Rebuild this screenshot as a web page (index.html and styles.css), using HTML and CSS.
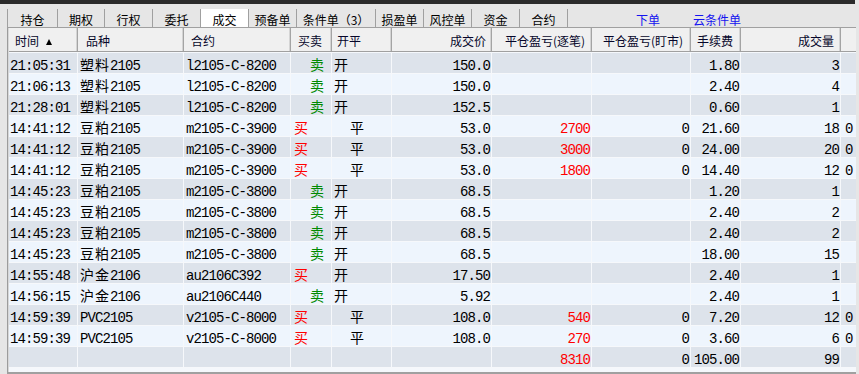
FILE: index.html
```html
<!DOCTYPE html>
<html lang="zh">
<head>
<meta charset="utf-8">
<title>成交</title>
<link rel="stylesheet" href="styles.css">
</head>
<body>
<div class="topband"></div>
<div class="tabbar">
  <div class="tab first">持仓</div>
  <div class="tab w47">期权</div>
  <div class="tab">行权</div>
  <div class="tab">委托</div>
  <div class="tab active">成交</div>
  <div class="tab">预备单</div>
  <div class="tab wide">条件单（3）</div>
  <div class="tab">损盈单</div>
  <div class="tab">风控单</div>
  <div class="tab">资金</div>
  <div class="tab last">合约</div>
  <span class="link first-link">下单</span>
  <span class="link">云条件单</span>
</div>
<div class="panel">
  <div class="row hdr">
    <div class="h hl h1">时间<span class="arrow"></span></div>
    <div class="h hl h2">品种</div>
    <div class="h hl h3">合约</div>
    <div class="h hl h4">买卖</div>
    <div class="h hl h5">开平</div>
    <div class="h hr h6">成交价</div>
    <div class="h hr h7">平仓盈亏(逐笔)</div>
    <div class="h hr h8">平仓盈亏(盯市)</div>
    <div class="h hr h9">手续费</div>
    <div class="h hr h10">成交量</div>
    <div class="h hl h11"></div>
  </div>

  <div class="row d odd">
    <div class="c c1">21:05:31</div><div class="c c2"><span class="cj">塑料</span>2105</div><div class="c c3">l2105-C-8200</div>
    <div class="c c4"><span class="cj sell">卖</span></div><div class="c c5"><span class="cj">开</span></div>
    <div class="c r">150.0</div><div class="c r red"></div><div class="c r"></div><div class="c r">1.80</div><div class="c r">3</div><div class="c c11"></div>
  </div>
  <div class="row d even">
    <div class="c c1">21:06:13</div><div class="c c2"><span class="cj">塑料</span>2105</div><div class="c c3">l2105-C-8200</div>
    <div class="c c4"><span class="cj sell">卖</span></div><div class="c c5"><span class="cj">开</span></div>
    <div class="c r">150.0</div><div class="c r red"></div><div class="c r"></div><div class="c r">2.40</div><div class="c r">4</div><div class="c c11"></div>
  </div>
  <div class="row d odd">
    <div class="c c1">21:28:01</div><div class="c c2"><span class="cj">塑料</span>2105</div><div class="c c3">l2105-C-8200</div>
    <div class="c c4"><span class="cj sell">卖</span></div><div class="c c5"><span class="cj">开</span></div>
    <div class="c r">152.5</div><div class="c r red"></div><div class="c r"></div><div class="c r">0.60</div><div class="c r">1</div><div class="c c11"></div>
  </div>
  <div class="row d even">
    <div class="c c1">14:41:12</div><div class="c c2"><span class="cj">豆粕</span>2105</div><div class="c c3">m2105-C-3900</div>
    <div class="c c4"><span class="cj buy">买</span></div><div class="c c5"><span class="cj close">平</span></div>
    <div class="c r">53.0</div><div class="c r red">2700</div><div class="c r">0</div><div class="c r">21.60</div><div class="c r">18</div><div class="c c11">0</div>
  </div>
  <div class="row d odd">
    <div class="c c1">14:41:12</div><div class="c c2"><span class="cj">豆粕</span>2105</div><div class="c c3">m2105-C-3900</div>
    <div class="c c4"><span class="cj buy">买</span></div><div class="c c5"><span class="cj close">平</span></div>
    <div class="c r">53.0</div><div class="c r red">3000</div><div class="c r">0</div><div class="c r">24.00</div><div class="c r">20</div><div class="c c11">0</div>
  </div>
  <div class="row d even">
    <div class="c c1">14:41:12</div><div class="c c2"><span class="cj">豆粕</span>2105</div><div class="c c3">m2105-C-3900</div>
    <div class="c c4"><span class="cj buy">买</span></div><div class="c c5"><span class="cj close">平</span></div>
    <div class="c r">53.0</div><div class="c r red">1800</div><div class="c r">0</div><div class="c r">14.40</div><div class="c r">12</div><div class="c c11">0</div>
  </div>
  <div class="row d odd">
    <div class="c c1">14:45:23</div><div class="c c2"><span class="cj">豆粕</span>2105</div><div class="c c3">m2105-C-3800</div>
    <div class="c c4"><span class="cj sell">卖</span></div><div class="c c5"><span class="cj">开</span></div>
    <div class="c r">68.5</div><div class="c r red"></div><div class="c r"></div><div class="c r">1.20</div><div class="c r">1</div><div class="c c11"></div>
  </div>
  <div class="row d even">
    <div class="c c1">14:45:23</div><div class="c c2"><span class="cj">豆粕</span>2105</div><div class="c c3">m2105-C-3800</div>
    <div class="c c4"><span class="cj sell">卖</span></div><div class="c c5"><span class="cj">开</span></div>
    <div class="c r">68.5</div><div class="c r red"></div><div class="c r"></div><div class="c r">2.40</div><div class="c r">2</div><div class="c c11"></div>
  </div>
  <div class="row d odd">
    <div class="c c1">14:45:23</div><div class="c c2"><span class="cj">豆粕</span>2105</div><div class="c c3">m2105-C-3800</div>
    <div class="c c4"><span class="cj sell">卖</span></div><div class="c c5"><span class="cj">开</span></div>
    <div class="c r">68.5</div><div class="c r red"></div><div class="c r"></div><div class="c r">2.40</div><div class="c r">2</div><div class="c c11"></div>
  </div>
  <div class="row d even">
    <div class="c c1">14:45:23</div><div class="c c2"><span class="cj">豆粕</span>2105</div><div class="c c3">m2105-C-3800</div>
    <div class="c c4"><span class="cj sell">卖</span></div><div class="c c5"><span class="cj">开</span></div>
    <div class="c r">68.5</div><div class="c r red"></div><div class="c r"></div><div class="c r">18.00</div><div class="c r">15</div><div class="c c11"></div>
  </div>
  <div class="row d odd">
    <div class="c c1">14:55:48</div><div class="c c2"><span class="cj">沪金</span>2106</div><div class="c c3">au2106C392</div>
    <div class="c c4"><span class="cj buy">买</span></div><div class="c c5"><span class="cj">开</span></div>
    <div class="c r">17.50</div><div class="c r red"></div><div class="c r"></div><div class="c r">2.40</div><div class="c r">1</div><div class="c c11"></div>
  </div>
  <div class="row d even">
    <div class="c c1">14:56:15</div><div class="c c2"><span class="cj">沪金</span>2106</div><div class="c c3">au2106C440</div>
    <div class="c c4"><span class="cj sell">卖</span></div><div class="c c5"><span class="cj">开</span></div>
    <div class="c r">5.92</div><div class="c r red"></div><div class="c r"></div><div class="c r">2.40</div><div class="c r">1</div><div class="c c11"></div>
  </div>
  <div class="row d odd">
    <div class="c c1">14:59:39</div><div class="c c2">PVC2105</div><div class="c c3">v2105-C-8000</div>
    <div class="c c4"><span class="cj buy">买</span></div><div class="c c5"><span class="cj close">平</span></div>
    <div class="c r">108.0</div><div class="c r red">540</div><div class="c r">0</div><div class="c r">7.20</div><div class="c r">12</div><div class="c c11">0</div>
  </div>
  <div class="row d even">
    <div class="c c1">14:59:39</div><div class="c c2">PVC2105</div><div class="c c3">v2105-C-8000</div>
    <div class="c c4"><span class="cj buy">买</span></div><div class="c c5"><span class="cj close">平</span></div>
    <div class="c r">108.0</div><div class="c r red">270</div><div class="c r">0</div><div class="c r">3.60</div><div class="c r">6</div><div class="c c11">0</div>
  </div>
  <div class="row d odd">
    <div class="c c1"></div><div class="c c2"></div><div class="c c3"></div>
    <div class="c c4"></div><div class="c c5"></div>
    <div class="c r"></div><div class="c r red">8310</div><div class="c r">0</div><div class="c r">105.00</div><div class="c r">99</div><div class="c c11"></div>
  </div>
</div>
</body>
</html>
```

FILE: styles.css
```css
html, body {
  margin: 0;
  padding: 0;
}
body {
  width: 859px;
  height: 374px;
  overflow: hidden;
  background: #e6e6e6;
  font-family: "Noto Sans CJK SC", sans-serif;
  color: #000;
}

.topband {
  height: 4px;
  width: 855px;
  background: #2b2b2b;
}

/* ---------- tab bar ---------- */
.tabbar {
  display: flex;
  align-items: flex-end;
  box-sizing: border-box;
  height: 24px;
  margin-left: 7px;
  width: 849px;
  border-bottom: 1px solid #a0a0a0;
  font-size: 12px;
}
.tab {
  box-sizing: border-box;
  flex: none;
  width: 48px;
  height: 18px;
  line-height: 22px;
  text-align: center;
  border-left: 1px solid #a0a0a0;
  white-space: nowrap;
}
.tab.first { width: 50px; }
.tab.w47 { width: 47px; }
.tab.wide { width: 79px; }
.tab.last { width: 49px; border-right: 1px solid #a0a0a0; }
.tab.active { background: #ffffff; }

.link {
  flex: none;
  height: 18px;
  line-height: 22px;
  color: #1414f0;
  white-space: nowrap;
}
.link.first-link { margin-left: 68px; }
.link + .link { margin-left: 33px; }

/* ---------- grid panel ---------- */
.panel {
  box-sizing: border-box;
  margin-left: 7px;
  width: 849px;
  height: 346px;
  padding-left: 1px;
  border-left: 1px solid #9c9c9c;
  border-bottom: 2px solid #a0a0a0;
  box-shadow: inset 1px 0 0 #d8d8d8;
  background: #f5f8fc;
  overflow: hidden;
}
.row {
  display: grid;
  grid-template-columns: 69px 106px 107px 41px 60px 100px 100px 99px 50px 100px 80px;
}

.hdr {
  height: 23px;
  background: #f0f0f0;
  border-bottom: 1px solid #a0a0a0;
  margin-bottom: 1px;
  font-size: 12px;
}
.h {
  box-sizing: border-box;
  height: 23px;
  padding-top: 3px;
  line-height: 20px;
  border-right: 1px solid #a4a4a4;
  box-shadow: inset -1px 0 0 #d4d4d4;
  white-space: nowrap;
  color: #06062a;
}
.hl { text-align: left; }
.hr { text-align: right; padding-right: 6px; }
.h1 { padding-left: 6px; }
.h2 { padding-left: 8px; }
.h3 { padding-left: 7px; }
.h4 { padding-left: 7px; }
.h5 { padding-left: 5px; }
.h6 { padding-right: 5px; }
.h8 { padding-right: 7px; }
.h9 { padding-right: 7px; }
.h11 { border-right: none; box-shadow: none; }

.arrow {
  display: inline-block;
  width: 0;
  height: 0;
  border-left: 3.5px solid transparent;
  border-right: 3.5px solid transparent;
  border-bottom: 6px solid #000;
  margin-left: 7px;
  vertical-align: 1px;
}

/* ---------- data rows ---------- */
.d {
  height: 21px;
  box-sizing: border-box;
  border-bottom: 1px solid #f6f8fb;
  font-family: "Liberation Mono", monospace;
  font-size: 14px;
  letter-spacing: -0.9px;
}
.odd { background: #dde3eb; }
.even { background: #eef5fd; }

.c {
  box-sizing: border-box;
  height: 20px;
  padding-top: 3px;
  line-height: 20px;
  border-right: 1px solid #f6f8fb;
  white-space: pre;
}
.c1 { padding-left: 1px; }
.c2 { padding-left: 2px; }
.c3 { padding-left: 2px; }
.c4 { padding-left: 3px; }
.c5 { padding-left: 2px; }
.c11 { padding-left: 4px; border-right: none; }
.r { text-align: right; padding-right: 1px; }
.red { color: #ff0000; }

.cj {
  font-family: "Noto Sans CJK SC", sans-serif;
  font-size: 14px;
  line-height: 16px;
  letter-spacing: 1px;
}
.sell { color: #008a00; padding-left: 16px; }
.buy { color: #ff0000; }
.close { padding-left: 16px; }
```
